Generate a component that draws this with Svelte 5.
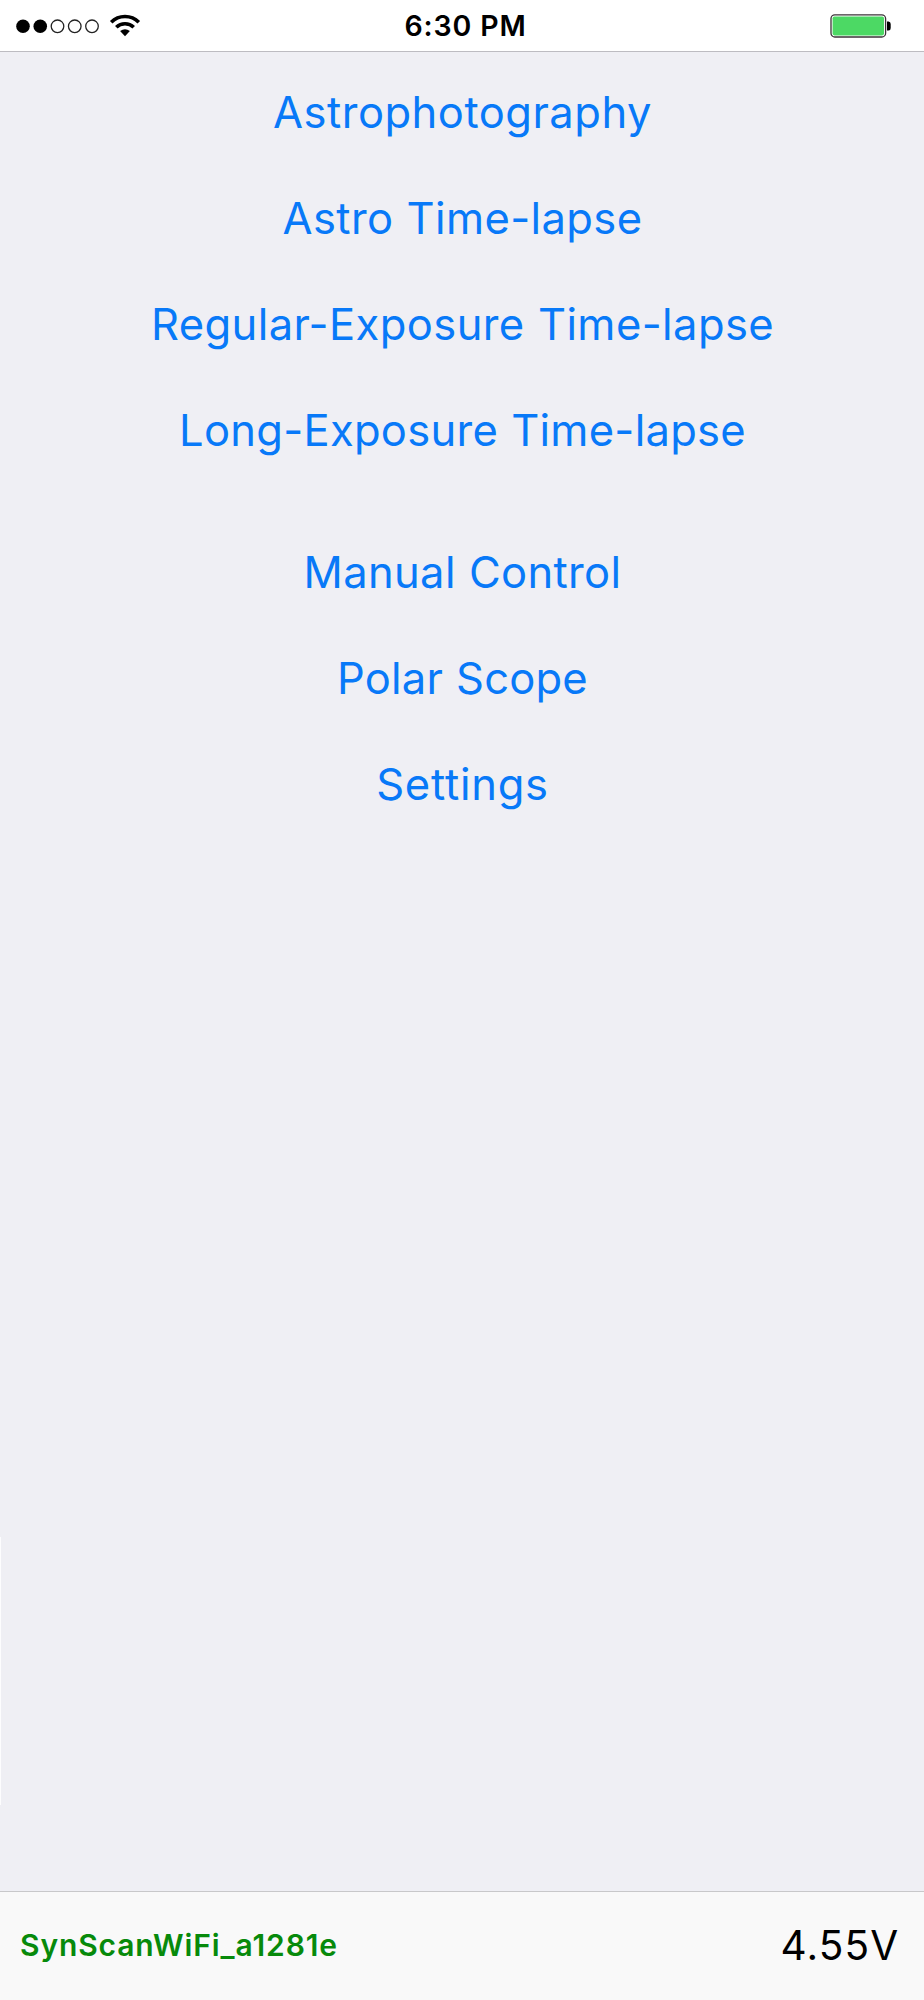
<script>
  const groups = [
    [
      { label: 'Astrophotography', tracking: 0.5 },
      { label: 'Astro Time-lapse', tracking: 0.38 },
      { label: 'Regular-Exposure Time-lapse', tracking: 0.42 },
      { label: 'Long-Exposure Time-lapse', tracking: 0.28 }
    ],
    [
      { label: 'Manual Control', tracking: 0.34 },
      { label: 'Polar Scope', tracking: 0.2 },
      { label: 'Settings', tracking: 0.77 }
    ]
  ];
  const signal = [true, true, false, false, false];
</script>

<div class="screen">
  <header class="status">
    <div class="left">
      <svg class="dots" width="86" height="16" viewBox="0 0 86 16">
        {#each signal as on, i}
          <circle cx={8 + i * 17.25} cy="8.3" r={on ? 6.8 : 6.3} class:on />
        {/each}
      </svg>
      <svg class="wifi" width="32" height="24" viewBox="0 0 32 24">
        <path d="M2.2 9.3 A19.2 19.2 0 0 1 29.8 9.3" />
        <path d="M7.3 14.3 A12.3 12.3 0 0 1 24.7 14.3" />
        <path class="tip" d="M11.1 18 Q16 14.6 20.9 18 L16 23.3 Z" />
      </svg>
    </div>
    <time>6:30 PM</time>
    <div class="right">
      <svg width="62" height="26" viewBox="0 0 62 26">
        <rect x="1" y="1.8" width="54.6" height="22.2" rx="3.8" fill="#fff" stroke="#3c3438" stroke-width="1.3" />
        <rect x="2.6" y="3.4" width="51.4" height="19" rx="1.8" fill="#4cd964" />
        <path d="M57 8.5 H58.5 Q60.7 8.5 60.7 11 V15 Q60.7 17.5 58.5 17.5 H57 Z" fill="#000" />
      </svg>
    </div>
  </header>

  <main>
    <div class="edge"></div>
    <nav>
      {#each groups as group}
        <div class="group">
          {#each group as item}
            <button style:letter-spacing="{item.tracking}px">{item.label}</button>
          {/each}
        </div>
      {/each}
    </nav>
  </main>

  <footer>
    <span class="network">SynScanWiFi_a1281e</span>
    <span class="voltage">4.55V</span>
  </footer>
</div>

<style>
  :global(body) { background: #efeff4; }
  .screen {
    width: 924px;
    height: 2000px;
    display: flex;
    flex-direction: column;
    background: #efeff4;
    font-family: Inter, "Liberation Sans", sans-serif;
    overflow: hidden;
  }
  .status {
    box-sizing: border-box;
    height: 52px;
    flex: none;
    display: grid;
    grid-template-columns: 1fr auto 1fr;
    align-items: center;
    background: #fff;
    border-bottom: 1px solid #bdbcc1;
  }
  .left { display: flex; align-items: center; padding-left: 15px; gap: 8px; }
  .left svg { display: block; }
  .wifi { margin-top: -2px; }
  circle { fill: #fff; stroke: #222; stroke-width: 1.3; }
  circle.on { fill: #000; stroke: none; }
  .wifi path { fill: none; stroke: #000; stroke-width: 3.6; }
  .wifi .tip { fill: #000; stroke: none; }
  time { font-size: 28.5px; font-weight: 600; letter-spacing: 0.87px; margin-left: 7px; white-space: nowrap; }
  .right { display: flex; justify-content: flex-end; padding-right: 32px; }
  .right svg { display: block; }
  main { flex: 1; display: flex; }
  .edge { width: 1px; height: 268px; margin: 1485px -1px 0 0; background: #fdfdfe; }
  nav { flex: 1; display: flex; flex-direction: column; gap: 36px; padding-top: 7px; }
  .group { display: flex; flex-direction: column; }
  button {
    height: 106px;
    padding: 0 0 0 1px;
    border: 0;
    background: none;
    font: 400 43.5px Inter, "Liberation Sans", sans-serif;
    font-variant-ligatures: no-contextual;
    word-spacing: 0.6px;
    color: #0879f8;
    text-align: center;
  }
  footer {
    box-sizing: border-box;
    height: 109px;
    flex: none;
    display: flex;
    align-items: center;
    justify-content: space-between;
    padding: 0 25px 2px 20px;
    background: #f9f9f9;
    border-top: 1px solid #c8c8ca;
  }
  .network { font-size: 30px; font-weight: 600; letter-spacing: 0.89px; color: #078a0b; }
  .voltage { font-size: 40.5px; letter-spacing: 1.2px; margin-right: -0.5px; color: #000; }
</style>
